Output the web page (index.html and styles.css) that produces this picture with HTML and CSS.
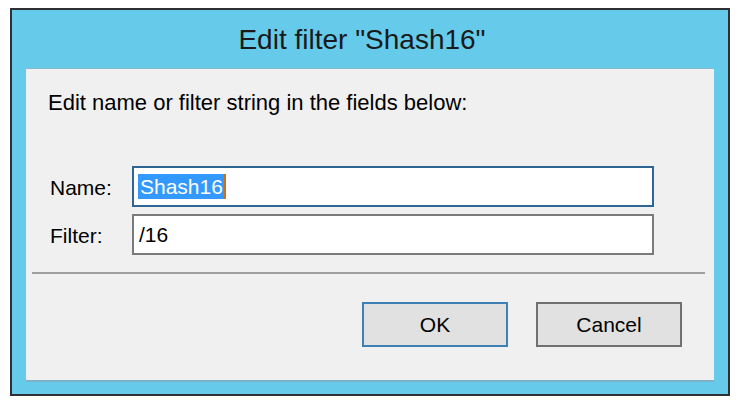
FILE: index.html
```html
<!DOCTYPE html>
<html>
<head>
<meta charset="utf-8">
<link rel="stylesheet" href="styles.css">
</head>
<body>
<div class="window">
  <div class="titlebar">Edit filter "Shash16"</div>
  <div class="panel">
    <div class="intro">Edit name or filter string in the fields below:</div>
    <div class="fields">
      <div class="row">
        <span class="label">Name:</span>
        <div class="field focused"><span class="sel">Shash16</span><span class="caret"></span></div>
      </div>
      <div class="row">
        <span class="label">Filter:</span>
        <div class="field"><span class="val">/16</span></div>
      </div>
    </div>
    <div class="sep"></div>
    <div class="buttons">
      <div class="btn default">OK</div>
      <div class="btn">Cancel</div>
    </div>
  </div>
</div>
</body>
</html>
```

FILE: styles.css
```css
html, body {
  margin: 0;
  padding: 0;
  background: #ffffff;
}
body {
  font-family: "Liberation Sans", Arial, sans-serif;
  color: #000;
}
.window {
  margin: 8px 0 0 10px;
  width: 720px;
  height: 388px;
  box-sizing: border-box;
  border: 2px solid #2e3034;
  background: #66cbea;
  padding: 0 14px 12px 14px;
  display: flex;
  flex-direction: column;
}
.titlebar {
  height: 58px;
  box-sizing: border-box;
  padding-top: 14px;
  padding-right: 16px;
  font-size: 28px;
  line-height: 32px;
  text-align: center;
  color: #1a1a1a;
}
.panel {
  height: 314px;
  box-sizing: border-box;
  background: #f0f0f0;
  border-top: 1px solid #86b8cc;
  border-bottom: 2px solid #7cb2c8;
  display: flex;
  flex-direction: column;
}
.intro {
  margin: 21px 0 0 22px;
  font-size: 22px;
  line-height: 25px;
}
.fields {
  margin-top: 51px;
  display: flex;
  flex-direction: column;
  gap: 7px;
}
.row {
  display: flex;
  align-items: center;
  padding-left: 24px;
}
.label {
  width: 82px;
  font-size: 21px;
  line-height: 24px;
  position: relative;
  top: 1px;
}
.field {
  width: 522px;
  height: 41px;
  box-sizing: border-box;
  border: 2px solid #7a7a7a;
  background: #fff;
  display: flex;
  align-items: center;
  padding-left: 4px;
  font-size: 21px;
}
.field.focused {
  border-color: #2f6592;
}
.sel {
  background: #3399ff;
  color: #fff;
  line-height: 25px;
  height: 25px;
  padding: 0 1px 0 2px;
  margin-top: -1px;
}
.caret {
  width: 2px;
  height: 25px;
  background: #d0700e;
  margin-top: -1px;
}
.val {
  padding-left: 1px;
  line-height: 25px;
}
.sep {
  margin: 17px 9px 0 6px;
  height: 2px;
  background: #a0a0a0;
}
.buttons {
  margin-top: 28px;
  display: flex;
  justify-content: flex-end;
  gap: 28px;
  padding-right: 32px;
}
.btn {
  width: 146px;
  height: 45px;
  box-sizing: border-box;
  border: 2px solid #707070;
  background: #e1e1e1;
  font-size: 21px;
  display: flex;
  align-items: center;
  justify-content: center;
}
.btn.default {
  border-color: #3c80b5;
}
```
